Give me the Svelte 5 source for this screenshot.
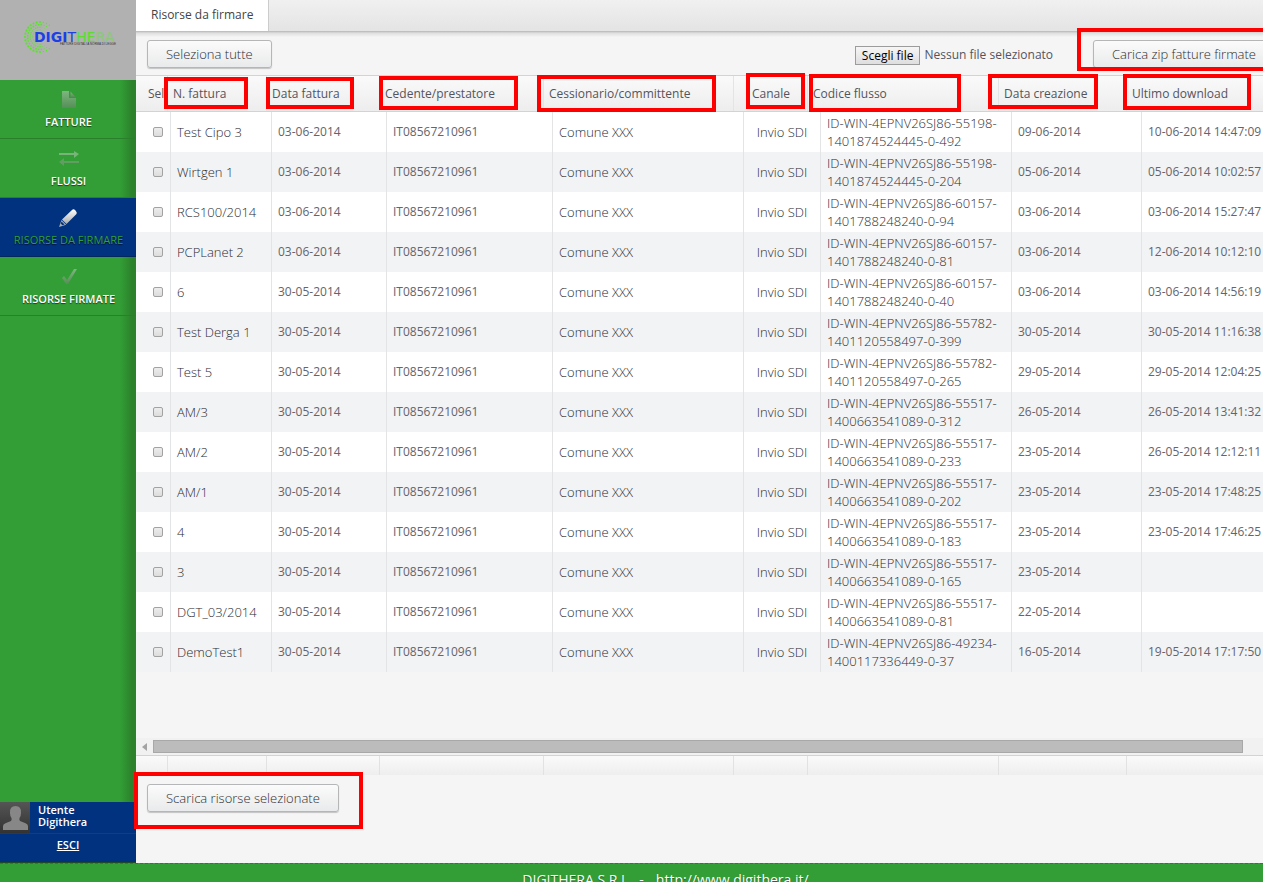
<script>
    const rows = [
        ['Test Cipo 3', '03-06-2014', '55198-', '1401874524445-0-492', '09-06-2014', '10-06-2014 14:47:09'],
        ['Wirtgen 1', '03-06-2014', '55198-', '1401874524445-0-204', '05-06-2014', '05-06-2014 10:02:57'],
        ['RCS100/2014', '03-06-2014', '60157-', '1401788248240-0-94', '03-06-2014', '03-06-2014 15:27:47'],
        ['PCPLanet 2', '03-06-2014', '60157-', '1401788248240-0-81', '03-06-2014', '12-06-2014 10:12:10'],
        ['6', '30-05-2014', '60157-', '1401788248240-0-40', '03-06-2014', '03-06-2014 14:56:19'],
        ['Test Derga 1', '30-05-2014', '55782-', '1401120558497-0-399', '30-05-2014', '30-05-2014 11:16:38'],
        ['Test 5', '30-05-2014', '55782-', '1401120558497-0-265', '29-05-2014', '29-05-2014 12:04:25'],
        ['AM/3', '30-05-2014', '55517-', '1400663541089-0-312', '26-05-2014', '26-05-2014 13:41:32'],
        ['AM/2', '30-05-2014', '55517-', '1400663541089-0-233', '23-05-2014', '26-05-2014 12:12:11'],
        ['AM/1', '30-05-2014', '55517-', '1400663541089-0-202', '23-05-2014', '23-05-2014 17:48:25'],
        ['4', '30-05-2014', '55517-', '1400663541089-0-183', '23-05-2014', '23-05-2014 17:46:25'],
        ['3', '30-05-2014', '55517-', '1400663541089-0-165', '23-05-2014', ''],
        ['DGT_03/2014', '30-05-2014', '55517-', '1400663541089-0-81', '22-05-2014', ''],
        ['DemoTest1', '30-05-2014', '49234-', '1400117336449-0-37', '16-05-2014', '19-05-2014 17:17:50']
    ]

    const headers = ['Sel', 'N. fattura', 'Data fattura', 'Cedente/prestatore', 'Cessionario/committente', 'Canale', 'Codice flusso', 'Data creazione', 'Ultimo download']
    const headWidths = [32, 99, 113, 164, 190, 74, 191, 128, 190]
    const bodyWidths = [35, 101, 115, 166, 191, 77, 191, 130, 190]
    const sum = (list) => list.reduce((a, b) => a + b, 0)

    // highlight frames laid over the page: left, top, width, height
    const marks = [
        [164, 77, 84, 32],
        [266, 77, 88, 32],
        [379, 76, 139, 34],
        [537, 75, 179, 37],
        [746, 73, 59, 36],
        [809, 74, 152, 38],
        [988, 74, 110, 35],
        [1123, 74, 128, 36],
        [1077, 28, 220, 43],
        [134, 772, 229, 57]
    ]

    // dotted rings of the logo
    const dots = []
    for (let ring = 0; ring < 4; ring++) {
        for (let i = 0; i < 28; i++) {
            const a = (i / 28) * Math.PI * 2 + ring * 0.11
            if (Math.cos(a) > 0.75 - ring * 0.1) continue
            const r = 15 - ring * 2.6
            dots.push({ x: 18 + r * Math.cos(a), y: 17 + r * Math.sin(a), r: (1.1 - ring * 0.2) * (Math.cos(a) < 0.2 ? 1 : 0.6) })
        }
    }

    let picker
    let fileName = 'Nessun file selezionato'
    let selected = rows.map(() => false)

    function selectAll() {
        selected = rows.map(() => true)
    }

    function pick() {
        if (picker.files.length) fileName = picker.files[0].name
    }
</script>

<div class="app">
    <div class="main">
        <aside>
            <div class="logo">
                <svg width="110" height="36" viewBox="0 0 110 36" role="img" aria-label="Digithera">
                    {#each dots as d}
                        <circle cx={d.x} cy={d.y} r={d.r} fill="#55e622" />
                    {/each}
                    <text x="12" y="22" class="brand"><tspan class="heavy">DIGI</tspan>T<tspan class="lime">HE</tspan><tspan class="pale">RA</tspan></text>
                    <text x="38" y="25" class="claim">FATTURE DIGITALI A NORMA DI LEGGE</text>
                </svg>
            </div>
            <nav>
                <a href="#fatture">
                    <svg width="20" height="20" viewBox="0 0 20 20">
                        <defs>
                            <linearGradient id="dim" x1="0" y1="0" x2="0" y2="1">
                                <stop offset="0" stop-color="#7db67e" />
                                <stop offset="1" stop-color="#568e58" />
                            </linearGradient>
                        </defs>
                        <path d="M3 1h7v7h7v10H3z" fill="url(#dim)" />
                        <path d="M11.500 1.500L16.500 7h-5z" fill="url(#dim)" />
                    </svg>
                    <span>FATTURE</span>
                </a>
                <a href="#flussi">
                    <svg width="20" height="20" viewBox="0 0 20 20">
                        <path d="M0 4h15V2l5 3-5 4V6H0z" fill="#78b379" />
                        <path d="M20 12H5V9l-5 4 5 4v-3h15z" fill="#629d63" />
                    </svg>
                    <span>FLUSSI</span>
                </a>
                <a href="#da-firmare" class="active">
                    <svg width="20" height="20" viewBox="0 0 20 20">
                        <defs>
                            <linearGradient id="lit" x1="0" y1="0" x2="0" y2="1">
                                <stop offset="0" stop-color="#fff" />
                                <stop offset="1" stop-color="#aaa" />
                            </linearGradient>
                        </defs>
                        <path d="M13 2q1.500-1.500 3.500.5t1 3.500L7.500 16 3 11.500z" fill="url(#lit)" />
                        <path d="M2.500 12l4.700 4.700L0 19z" fill="#aaa" />
                        <path d="M2.500 13.500l3 3-2 .7-1.800-1.800z" fill="#00327f" />
                    </svg>
                    <span>RISORSE DA FIRMARE</span>
                </a>
                <a href="#firmate">
                    <svg width="20" height="20" viewBox="0 0 20 20">
                        <path d="M3 11l2-2 3 4 7-11h3L9 17H7z" fill="url(#dim)" />
                    </svg>
                    <span>RISORSE FIRMATE</span>
                </a>
            </nav>
            <div class="user">
                <div class="who">
                    <svg width="30" height="31" viewBox="0 0 30 31">
                        <defs>
                            <linearGradient id="dark" x1="0" y1="0" x2="0" y2="1">
                                <stop offset="0" stop-color="#555" />
                                <stop offset="1" stop-color="#333" />
                            </linearGradient>
                        </defs>
                        <rect width="30" height="31" fill="url(#dark)" />
                        <path d="M3 28v-4q0-2 3-3l5-2q1-1 .5-3Q10 14 10 11q-.500-7 5.500-7T21 11q0 3-1.500 5-.5 2 .5 3l5 2q3 1 3 3v4z" fill="#878787" />
                    </svg>
                    <span>Utente Digithera</span>
                </div>
                <a href="#esci">ESCI</a>
            </div>
        </aside>

        <section>
            <div class="tabs">
                <button type="button" class="tab">Risorse da firmare</button>
            </div>
            <div class="toolbar">
                <button type="button" class="btn" on:click={selectAll}>Seleziona tutte</button>
                <div class="upload">
                    <button type="button" class="choose" on:click={() => picker.click()}>Scegli file</button>
                    <input bind:this={picker} type="file" aria-label="Scegli file" hidden on:change={pick}>
                    <span>{fileName}</span>
                </div>
                <button type="button" class="btn">Carica zip fatture firmate</button>
            </div>

            <div class="head">
                <table style="width: {sum(headWidths)}px">
                    <colgroup>
                        {#each headWidths as w}<col style="width: {w}px">{/each}
                    </colgroup>
                    <thead>
                        <tr>
                            {#each headers as h}<th scope="col">{h}</th>{/each}
                        </tr>
                    </thead>
                </table>
            </div>

            <div class="scroller">
                <table style="width: {sum(bodyWidths)}px">
                    <colgroup>
                        {#each bodyWidths as w}<col style="width: {w}px">{/each}
                    </colgroup>
                    <tbody>
                        {#each rows as r, i}
                            <tr>
                                <td><input type="checkbox" aria-label="Seleziona {r[0]}" bind:checked={selected[i]}></td>
                                <td>{r[0]}</td>
                                <td class="num">{r[1]}</td>
                                <td class="num">IT08567210961</td>
                                <td>Comune XXX</td>
                                <td>Invio SDI</td>
                                <td>ID-WIN-4EPNV26SJ86-{r[2]}<br>{r[3]}</td>
                                <td class="num">{r[4]}</td>
                                <td class="num">{r[5]}</td>
                            </tr>
                        {/each}
                    </tbody>
                </table>
            </div>
            <div class="scrollbar">
                <svg width="5" height="8" viewBox="0 0 5 8"><path d="M5 0v8L0 4z" fill="#a3a3a3" /></svg>
                <div class="thumb"></div>
            </div>
            <div class="foot">
                {#each headWidths as w}<div style="width: {w}px"></div>{/each}
            </div>
            <div class="actions">
                <button type="button" class="btn">Scarica risorse selezionate</button>
            </div>
        </section>
    </div>

    <footer>
        <span>DIGITHERA S.R.L. &nbsp;-</span>
        <a href="http://www.digithera.it/">http://www.digithera.it/</a>
    </footer>

    {#each marks as [x, y, w, h]}
        <div class="mark" style="left: {x}px; top: {y}px; width: {w}px; height: {h}px"></div>
    {/each}
</div>

<style>
    :global(body){
        margin: 0;
    }

    .app{
        position: relative;
        display: flex;
        flex-direction: column;
        height: 100vh;
        overflow: hidden;
        background: #f5f5f5;
        color: #53545c;
        font: 400 13px/18px "Open Sans", sans-serif;
    }

    .app *{
        box-sizing: border-box;
    }

    .main{
        display: flex;
        flex: 1;
        min-height: 0;
    }

    aside{
        display: flex;
        flex-direction: column;
        flex: 0 0 136px;
        background: linear-gradient(to left, #2b822b, #2b822b 4px, #339e35 16px);
        color: #fff;
        font-weight: 600;
        font-size: 11px;
    }

    .logo{
        height: 80px;
        padding: 20px 0 0 22px;
        background: #b1b1b1;
    }

    .logo svg{
        display: block;
    }

    .brand{
        font: 14px "DejaVu Sans", sans-serif;
        fill: #1c3fe8;
    }

    .heavy{
        font-weight: bold;
    }

    .lime{
        fill: #5ddc2c;
    }

    .pale{
        fill: #8cc878;
    }

    .claim{
        font: 3px "Liberation Sans", sans-serif;
        fill: #333;
    }

    nav{
        flex: 1;
    }

    nav a{
        display: flex;
        flex-direction: column;
        align-items: center;
        height: 59px;
        padding: 10px 0 0 1px;
        border-bottom: 1px solid #2a7f2b;
        color: #fff;
        text-decoration: none;
        text-shadow: 0 1px 1px rgba(0, 0, 0, 0.6);
    }

    nav a span{
        line-height: 18px;
        margin-top: 3px;
        white-space: nowrap;
    }

    nav .active{
        background: #00327f;
        border-color: #00285f;
        color: #339e35;
        font-weight: 400;
    }

    .user{
        height: 61px;
        background: #00327f;
        border-bottom: 1px solid #1f4a2a;
        text-align: center;
    }

    .who{
        display: flex;
        gap: 8px;
        height: 32px;
        border-bottom: 1px solid #1c3c6c;
        text-align: left;
        line-height: 12px;
    }

    .who span{
        width: 60px;
        padding-top: 2px;
    }

    .user a{
        color: #fff;
        line-height: 22px;
    }

    section{
        display: flex;
        flex-direction: column;
        flex: 1;
        min-width: 0;
        overflow: hidden;
    }

    .tabs{
        height: 31px;
        background: linear-gradient(#f0f0f0, #e4e4e4);
    }

    .tab{
        height: 31px;
        padding: 0 15px 2px;
        border: 0;
        border-right: 1px solid #ccc;
        background: #fff;
        color: #444;
        font: 400 12px "Open Sans", sans-serif;
    }

    .toolbar{
        display: flex;
        align-items: flex-start;
        flex: 0 0 44px;
        padding: 9px 0 0 11px;
        background: linear-gradient(#b5b5b5, #dedede 2px, #f5f5f5 6px);
    }

    .btn{
        flex: none;
        height: 28px;
        padding: 0 18px;
        border: 1px solid #b4b6b8;
        border-radius: 3px;
        background: linear-gradient(#fbfbfb, #e9eaeb);
        box-shadow: 0 1px 1px rgba(0, 0, 0, 0.2);
        color: #2c2d33;
        font: 300 13px "Open Sans", sans-serif;
    }

    .upload{
        display: flex;
        align-items: center;
        gap: 4px;
        height: 30px;
        margin: 0 40px 0 auto;
        font-size: 12px;
        white-space: nowrap;
    }

    .toolbar .btn:last-child{
        margin-right: -12px;
    }

    .choose{
        height: 19px;
        padding: 0 6px;
        border: 1px solid #9c9c9c;
        background: linear-gradient(#f6f6f6, #dedede);
        color: #000;
        font: 12px "Open Sans", sans-serif;
    }

    table{
        border-collapse: separate;
        border-spacing: 0;
        table-layout: fixed;
    }

    .head{
        flex: none;
        border-top: 1px solid #d3d3d3;
        border-bottom: 1px solid #d3d3d3;
        background: linear-gradient(#fafafa, #ededed);
    }

    th{
        height: 35px;
        padding: 0 4px 0 5px;
        border-right: 1px solid #e2e4e5;
        font-weight: 400;
        font-size: 12px;
        text-align: left;
        white-space: nowrap;
        overflow: hidden;
    }

    th:first-child{
        padding: 0 0 0 12px;
    }

    th:nth-child(6), td:nth-child(6), td:first-child{
        text-align: center;
    }

    .scroller{
        flex: 1;
        min-height: 0;
        overflow: hidden;
    }

    td{
        height: 40px;
        padding: 0 6px;
        border-right: 1px solid #e2e4e6;
        background: #fff;
        color: #2c2d33;
        font-weight: 300;
        white-space: nowrap;
    }

    .num{
        color: #63646c;
        font-weight: 400;
        font-size: 12px;
    }

    tr:nth-child(even) td{
        background: #f2f3f5;
    }

    td:first-child{
        padding: 0 0 0 9px;
    }

    td input{
        appearance: none;
        display: block;
        width: 10px;
        height: 10px;
        margin: 0 auto;
        border: 1px solid #a2a2a2;
        border-radius: 2px;
        background: linear-gradient(#ededed, #dcdcdc);
    }

    td input:checked{
        background: #666;
    }

    .scrollbar{
        display: flex;
        align-items: center;
        gap: 6px;
        flex: 0 0 17px;
        padding: 0 20px 0 6px;
        background: #f1f1f1;
    }

    .thumb{
        flex: 1;
        height: 13px;
        border: 1px solid #a8a8a8;
        background: #bcbcbc;
    }

    .foot{
        display: flex;
        flex: 0 0 20px;
        border-top: 1px solid #d3d3d3;
        background: linear-gradient(#fafafa, #eee);
    }

    .foot div{
        flex: none;
        border-right: 1px solid #e2e2e2;
    }

    .actions{
        flex: 0 0 88px;
        padding: 9px 11px;
    }

    footer{
        flex: 0 0 19px;
        display: flex;
        justify-content: center;
        gap: 12px;
        padding-left: 68px;
        overflow: hidden;
        border-top: 1px dashed #2a7f2b;
        background: #339e35;
        color: #fff;
        font-size: 14px;
        line-height: 32px;
        text-shadow: 0 1px 1px rgba(0, 0, 0, 0.4);
    }

    footer a{
        color: #fff;
        text-decoration: none;
    }

    .mark{
        position: absolute;
        border: 4px solid #f00;
        pointer-events: none;
    }
</style>
